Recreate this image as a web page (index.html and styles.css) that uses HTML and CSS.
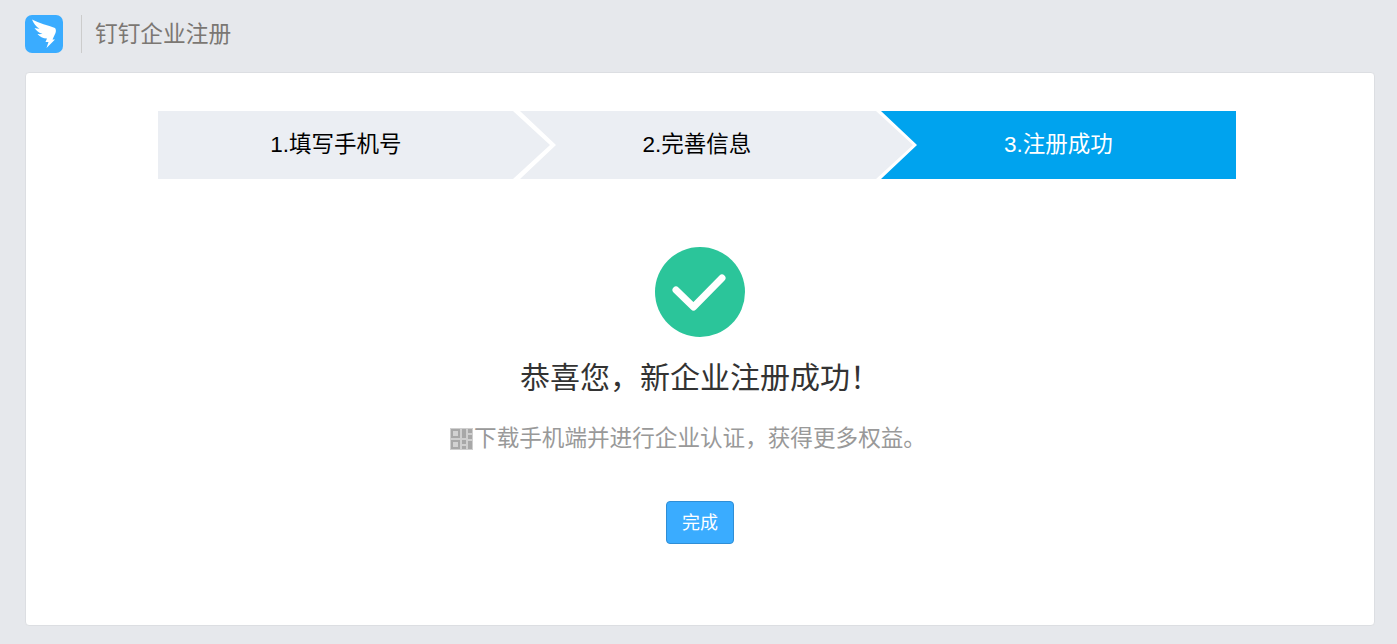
FILE: index.html
```html
<!DOCTYPE html>
<html lang="zh-CN">
<head>
    <meta charset="UTF-8">
    <meta name="viewport" content="width=device-width, initial-scale=1.0">
    <title>钉钉企业注册</title>
    <link rel="stylesheet" href="styles.css">
</head>
<body>

<div class="header">
    <svg class="logo" viewBox="0 0 38 38" width="38" height="38">
        <rect width="38" height="38" rx="7" fill="#3aacff"/>
        <path d="M7 4.500 C14 8 23 10.500 30 13 C31 14 31.200 16 30.500 18 L27.500 24.500 L30 24.500 L21.500 33 L23.500 27 L20.500 27 L22 23.500 C18 23.500 14.500 21.500 12.500 19 C14 19.200 16 19.200 17.500 18.800 C14 18 11 15.500 9.500 13 C11 13.500 13 13.800 14.500 13.800 C11 11.500 8.500 8.500 7 4.500 Z" fill="#fff"/>
    </svg>
    <div class="header-title">钉钉企业注册</div>
</div>

<div class="card">
    <div class="steps">
        <div class="step step-first">1.填写手机号</div>
        <div class="step step-middle">2.完善信息</div>
        <div class="step step-last">3.注册成功</div>
    </div>

    <div class="result">
        <svg class="result-icon" viewBox="0 0 90 90" width="90" height="90">
            <circle cx="45" cy="45" r="45" fill="#2bc59a"/>
            <path d="M21 43 L38.500 60 L67 31" fill="none" stroke="#fff" stroke-width="7" stroke-linecap="round" stroke-linejoin="round"/>
        </svg>
        <h2 class="result-title">恭喜您，新企业注册成功！</h2>
        <p class="result-desc">
            <svg class="qr-icon" viewBox="0 0 23 22" width="23" height="22">
                <rect width="23" height="22" fill="#cfcfcf"/>
                <path d="M1 1h9v9H1z M1 12h9v9H1z M12 1h4v9h-4z M12 12h4v4h-4z M18 1h4v4h-4z M18 7h4v4h-4z M18 13h4v8h-4z M12 18h4v3h-4z" fill="#a8a8a8"/>
                <path d="M3 3h5v5H3z M3 14h5v5H3z" fill="#d2d2d2"/>
            </svg><span>下载手机端并进行企业认证，获得更多权益。</span>
        </p>
        <button class="btn-finish">完成</button>
    </div>
</div>

</body>
</html>
```

FILE: styles.css
```css
* {
    box-sizing: border-box;
    margin: 0;
    padding: 0;
}

body {
    font-family: "Liberation Sans", "Noto Sans CJK SC", sans-serif;
    background-color: #e6e8ec;
    color: #333;
    height: 644px;
    overflow: hidden;
    padding: 15px 22px 0 25px;
}

.header {
    display: flex;
    align-items: center;
    height: 38px;
}

.logo {
    display: block;
    margin-right: 18px;
}

.header-title {
    border-left: 1px solid #ccc;
    height: 38px;
    line-height: 38px;
    padding-left: 13px;
    font-size: 22.7px;
    color: #7b7773;
}

.card {
    margin-top: 19px;
    height: 554px;
    background-color: #fff;
    border: 1px solid #dcdee2;
    border-radius: 4px;
    padding-top: 38px;
}

.steps {
    display: flex;
    width: 1078px;
    height: 68px;
    margin-left: 132px;
    font-size: 22.5px;
}

.step {
    display: flex;
    align-items: center;
    justify-content: center;
    height: 68px;
    padding-bottom: 6px;
    color: #000;
    background-color: #ebeef3;
}

.step-first {
    width: 392px;
    padding-right: 36px;
    clip-path: polygon(0 0, 355px 0, 392px 34px, 355px 68px, 0 68px);
}

.step-middle {
    width: 393px;
    margin-left: -30px;
    padding-right: 39px;
    clip-path: polygon(0 0, 356px 0, 393px 34px, 356px 68px, 0 68px, 36px 34px);
}

.step-last {
    width: 355px;
    margin-left: -32px;
    color: #fff;
    background-color: #00a3ee;
    clip-path: polygon(0 0, 355px 0, 355px 68px, 0 68px, 36px 34px);
}

.result {
    display: flex;
    flex-direction: column;
    align-items: center;
    margin-top: 68px;
}

.result-icon {
    display: block;
}

.result-title {
    margin-top: 17px;
    font-size: 30px;
    font-weight: 400;
    line-height: 48px;
    color: #333;
}

.result-desc {
    display: flex;
    align-items: center;
    margin-top: 20px;
    padding-right: 24px;
    font-size: 22.6px;
    line-height: 34px;
    color: #999;
}

.qr-icon {
    display: block;
    margin-right: 1px;
    filter: blur(0.6px);
}

.btn-finish {
    width: 68px;
    height: 43px;
    margin-top: 45px;
    padding-bottom: 4px;
    font-family: inherit;
    font-size: 18px;
    color: #fff;
    background-color: #3aacff;
    border: 1px solid #2f8ed6;
    border-radius: 4px;
    cursor: pointer;
}
```
